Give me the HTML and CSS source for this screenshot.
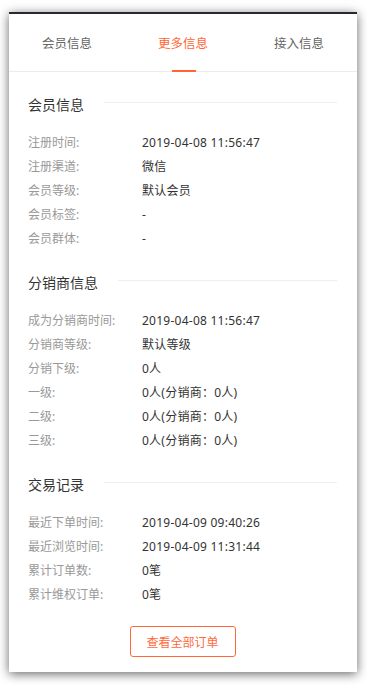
FILE: index.html
```html
<!DOCTYPE html>
<html lang="zh-CN">
<head>
<meta charset="utf-8">
<title>更多信息</title>
<link rel="stylesheet" href="styles.css">
</head>
<body>
<div class="page">
  <div class="card">
    <nav class="tabs">
      <div class="tab">会员信息</div>
      <div class="tab active">更多信息</div>
      <div class="tab">接入信息</div>
    </nav>
    <div class="content">
      <section class="section">
        <div class="section-title"><span>会员信息</span><i class="rule"></i></div>
        <dl class="rows">
          <dt>注册时间:</dt><dd>2019-04-08 11:56:47</dd>
          <dt>注册渠道:</dt><dd>微信</dd>
          <dt>会员等级:</dt><dd>默认会员</dd>
          <dt>会员标签:</dt><dd>-</dd>
          <dt>会员群体:</dt><dd>-</dd>
        </dl>
      </section>
      <section class="section">
        <div class="section-title"><span>分销商信息</span><i class="rule"></i></div>
        <dl class="rows">
          <dt>成为分销商时间:</dt><dd>2019-04-08 11:56:47</dd>
          <dt>分销商等级:</dt><dd>默认等级</dd>
          <dt>分销下级:</dt><dd>0人</dd>
          <dt>一级:</dt><dd>0人(分销商：0人)</dd>
          <dt>二级:</dt><dd>0人(分销商：0人)</dd>
          <dt>三级:</dt><dd>0人(分销商：0人)</dd>
        </dl>
      </section>
      <section class="section">
        <div class="section-title"><span>交易记录</span><i class="rule"></i></div>
        <dl class="rows">
          <dt>最近下单时间:</dt><dd>2019-04-09 09:40:26</dd>
          <dt>最近浏览时间:</dt><dd>2019-04-09 11:31:44</dd>
          <dt>累计订单数:</dt><dd>0笔</dd>
          <dt>累计维权订单:</dt><dd>0笔</dd>
        </dl>
      </section>
      <div class="actions">
        <button class="btn-outline" type="button">查看全部订单</button>
      </div>
    </div>
  </div>
</div>
</body>
</html>
```

FILE: styles.css
```css
* { box-sizing: border-box; }

html, body {
  margin: 0;
  background: #fff;
  font-family: "Noto Sans", "Noto Sans CJK SC", sans-serif;
  font-size: 12px;
  color: #333;
}

.page {
  padding: 12px 10px 13px 9px;
}

.card {
  background: #fff;
  border-top: 2px solid #262932;
  box-shadow: 0 2px 10px rgba(0, 0, 0, 0.6);
}

.tabs {
  display: grid;
  grid-template-columns: repeat(3, 1fr);
  height: 58px;
  border-bottom: 1px solid #ececec;
}

.tab {
  position: relative;
  display: flex;
  align-items: center;
  justify-content: center;
  font-size: 12.5px;
  color: #666;
}

.tab.active {
  color: #ff6633;
}

.tab.active::after {
  content: "";
  position: absolute;
  left: 50%;
  bottom: -1px;
  width: 24px;
  height: 2px;
  margin-left: -11px;
  background: #ff6633;
}

.content {
  padding: 22px 20px 15px 19px;
}

.section + .section {
  margin-top: 22px;
}

.section-title {
  display: flex;
  align-items: center;
  gap: 20px;
  height: 20px;
  font-size: 14px;
  color: #333;
}

.section-title .rule {
  flex: 1;
  height: 1px;
  margin-top: -3px;
  background: #eeeeee;
}

.rows {
  display: grid;
  grid-template-columns: 114px 1fr;
  grid-auto-rows: 24px;
  margin: 16px 0 0;
}

.rows dt,
.rows dd {
  margin: 0;
  display: flex;
  align-items: center;
  white-space: nowrap;
}

.rows dt {
  color: #999;
}

.rows dd {
  color: #333;
  letter-spacing: 0.25px;
}

.actions {
  display: flex;
  justify-content: center;
  margin-top: 20px;
}

.btn-outline {
  width: 106px;
  height: 31px;
  padding: 0;
  border: 1px solid #ff6a3d;
  border-radius: 3px;
  background: #fff;
  color: #ff6a3d;
  font-family: inherit;
  font-size: 12px;
  cursor: pointer;
}
```
